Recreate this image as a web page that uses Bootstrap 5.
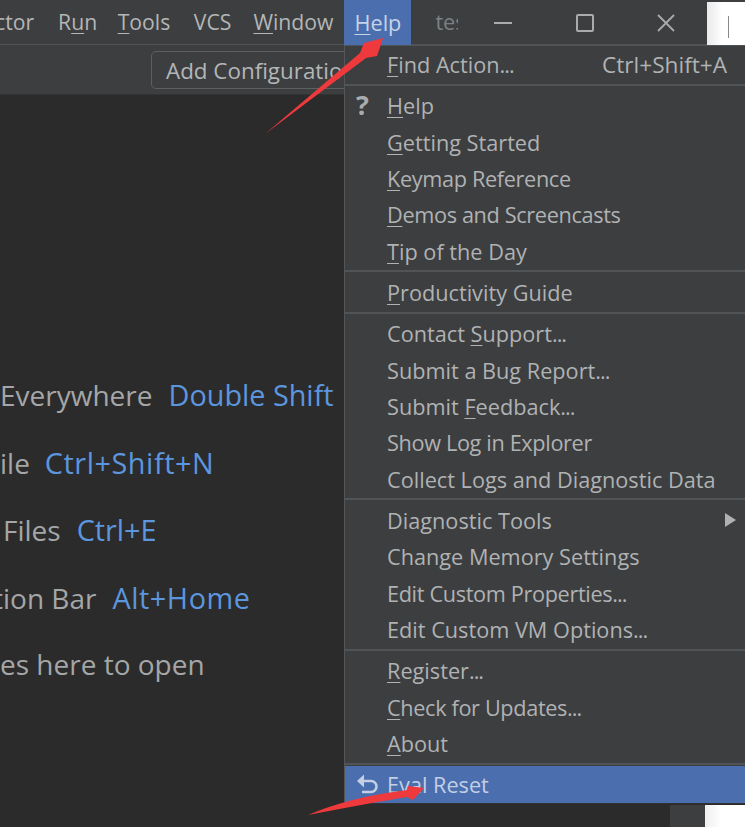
<!DOCTYPE html>
<html lang="en">
<head>
<meta charset="utf-8">
<title>Help menu</title>
<link href="https://cdn.jsdelivr.net/npm/bootstrap@5.3.0/dist/css/bootstrap.min.css" rel="stylesheet">
<style>
html,body{margin:0;height:827px;overflow:hidden;background:#2b2b2b}
.ide{position:relative;width:745px;height:827px;overflow:hidden;font-family:"Open Sans","Noto Sans",sans-serif;font-size:21.7px;color:#b4b6b7;background:#2b2b2b}
.ide u{text-underline-offset:3px;text-decoration-thickness:1px}
.titlebar{height:45px;background:#3c3e40;border-bottom:1px solid #515456}
.menu-word{white-space:nowrap;line-height:44px;font-size:21.2px}
.first-word{margin-left:-5px;margin-right:24px}
.gap-run{margin-right:20.5px}
.gap-tools{margin-right:23.5px}
.gap-vcs{margin-right:22px}
.gap-window{margin-right:11px}
.help-top{width:67px;height:45px;background:#4b6eaf;color:#c7d3e6;line-height:45px;text-align:center}
.title-clip{width:23px;margin-left:24px;margin-right:4px;overflow:hidden;color:#7d8082;line-height:44px;white-space:nowrap}
.winctl{width:81.7px;height:45px}
.corner{width:38px;height:43px;margin-top:2px;background:linear-gradient(90deg,#e9e9e9,#fff 40%);position:relative}
.corner i{position:absolute;left:21px;top:14px;width:1px;height:22px;background:#888}
.toolbar{height:50px;background:#3c3e40;border-bottom:1px solid #333}
.addcfg{margin-left:151px;height:38px;padding:0 14px;border:1px solid #5e6060;border-radius:5px;line-height:37px;white-space:nowrap;color:#b4b6b7;font-size:22.4px}
.hints{padding-top:266px;font-size:28px;color:#a4a6a7}
.hint{height:67.5px;line-height:67.5px;white-space:nowrap}
.hint b{font-weight:400;font-size:28.8px;color:#5c96df;margin-left:16px}
.hint b.wide-key{letter-spacing:.55px}
.hint b.near-key{margin-left:15px}
.cut-bar{margin-left:-7px}
.cut-files{margin-left:3px}
.popup{position:absolute;left:344px;top:45px;width:401px;height:759px;background:#3c3e40;border-left:1px solid #555;border-top:1px solid #515456;border-bottom:1px solid #2f3133;color:#b0b2b3}
.entry{height:36.3px;line-height:38px;padding-left:42px;padding-right:18px;white-space:nowrap;position:relative}
.short-cut{font-size:22.6px}
.dots{letter-spacing:-1px}
.tight{letter-spacing:-.35px}
.rule{height:5.1px;display:flex;align-items:center}
.rule::before{content:"";display:block;width:100%;height:2px;background:#515456}
.glyph{position:absolute;left:11px;top:0;font-weight:700;color:#a9abac}
.big-q{font-size:27px;line-height:35px}
.entry.hot{background:#4b6eaf;color:#c2cfe4;height:37px}
.tri{position:absolute;right:9px;top:11px;width:0;height:0;border-left:11px solid #afb1b2;border-top:7px solid transparent;border-bottom:7px solid transparent}
.bl-strip{position:absolute;left:670px;top:805px;width:35px;height:22px;background:#3c3e40}
.bl-white{position:absolute;left:705px;top:805px;width:40px;height:22px;background:linear-gradient(90deg,#eee,#fff 40%)}
.over{position:absolute;left:0;top:0;pointer-events:none}
</style>
</head>
<body>
<div class="ide">
  <div class="titlebar d-flex align-items-start">
    <span class="menu-word first-word">ctor</span>
    <span class="menu-word gap-run">R<u>u</u>n</span>
    <span class="menu-word gap-tools"><u>T</u>ools</span>
    <span class="menu-word gap-vcs">VCS</span>
    <span class="menu-word gap-window"><u>W</u>indow</span>
    <div class="help-top"><u>H</u>elp</div>
    <div class="title-clip">tes</div>
    <div class="winctl d-flex align-items-center justify-content-center"><svg width="18" height="2"><rect width="18" height="2" fill="#a9abac"/></svg></div>
    <div class="winctl d-flex align-items-center justify-content-center"><svg width="18" height="18"><rect x="1" y="1" width="16" height="16" rx="1" fill="none" stroke="#a9abac" stroke-width="2"/></svg></div>
    <div class="winctl d-flex align-items-center justify-content-center"><svg width="18" height="18"><path d="M1 1L17 17M17 1L1 17" stroke="#a9abac" stroke-width="1.8"/></svg></div>
    <div class="corner"><i></i></div>
  </div>
  <div class="toolbar d-flex align-items-center">
    <div class="addcfg">Add Configuration</div>
  </div>
  <div class="hints">
    <div class="hint">Everywhere<b>Double Shift</b></div>
    <div class="hint">ile<b class="wide-key near-key">Ctrl+Shift+N</b></div>
    <div class="hint cut-files">Files<b>Ctrl+E</b></div>
    <div class="hint cut-bar">tion Bar<b class="wide-key">Alt+Home</b></div>
    <div class="hint">es here to open</div>
  </div>
  <div class="bl-strip"></div>
  <div class="bl-white"></div>
  <div class="popup">
    <div class="entry d-flex justify-content-between"><span><u>F</u>ind Action<span class="dots">...</span></span><span class="short-cut">Ctrl+Shift+A</span></div>
    <div class="rule"></div>
    <div class="entry"><span class="glyph big-q">?</span><u>H</u>elp</div>
    <div class="entry"><u>G</u>etting Started</div>
    <div class="entry tight"><u>K</u>eymap Reference</div>
    <div class="entry tight"><u>D</u>emos and Screencasts</div>
    <div class="entry"><u>T</u>ip of the Day</div>
    <div class="rule"></div>
    <div class="entry"><u>P</u>roductivity Guide</div>
    <div class="rule"></div>
    <div class="entry">Contact <u>S</u>upport<span class="dots">...</span></div>
    <div class="entry">Submit a Bug Report<span class="dots">...</span></div>
    <div class="entry">Submit <u>F</u>eedback<span class="dots">...</span></div>
    <div class="entry tight">Show Log in Explorer</div>
    <div class="entry">Collect Logs and Diagnostic Data</div>
    <div class="rule"></div>
    <div class="entry">Diagnostic Tools<span class="tri"></span></div>
    <div class="entry">Change Memory Settings</div>
    <div class="entry tight">Edit Custom Properties<span class="dots">...</span></div>
    <div class="entry">Edit Custom VM Options<span class="dots">...</span></div>
    <div class="rule"></div>
    <div class="entry"><u>R</u>egister<span class="dots">...</span></div>
    <div class="entry tight"><u>C</u>heck for Updates<span class="dots">...</span></div>
    <div class="entry"><u>A</u>bout</div>
    <div class="rule"></div>
    <div class="entry hot"><span class="glyph"><svg width="24" height="24" viewBox="0 0 24 24" style="vertical-align:-4px"><path d="M3 8H15A5.5 5.5 0 0 1 15 19H6" fill="none" stroke="#c2cfe4" stroke-width="2.6"/><path d="M1 8L8 1.5V14.5Z" fill="#c2cfe4"/></svg></span>Eval Reset</div>
  </div>
  <svg class="over" width="745" height="827" viewBox="0 0 745 827">
    <path d="M265 134L360 53L364 43L383 38L377 56L366 58Z" fill="#ee3a3c"/>
    <path d="M308 815Q350 797 407 790L408 786L424 788L413 800L407 797Q370 803 308 815Z" fill="#ee3a3c"/>
  </svg>
</div>
<script src="https://cdn.jsdelivr.net/npm/bootstrap@5.3.0/dist/js/bootstrap.bundle.min.js"></script>
</body>
</html>
